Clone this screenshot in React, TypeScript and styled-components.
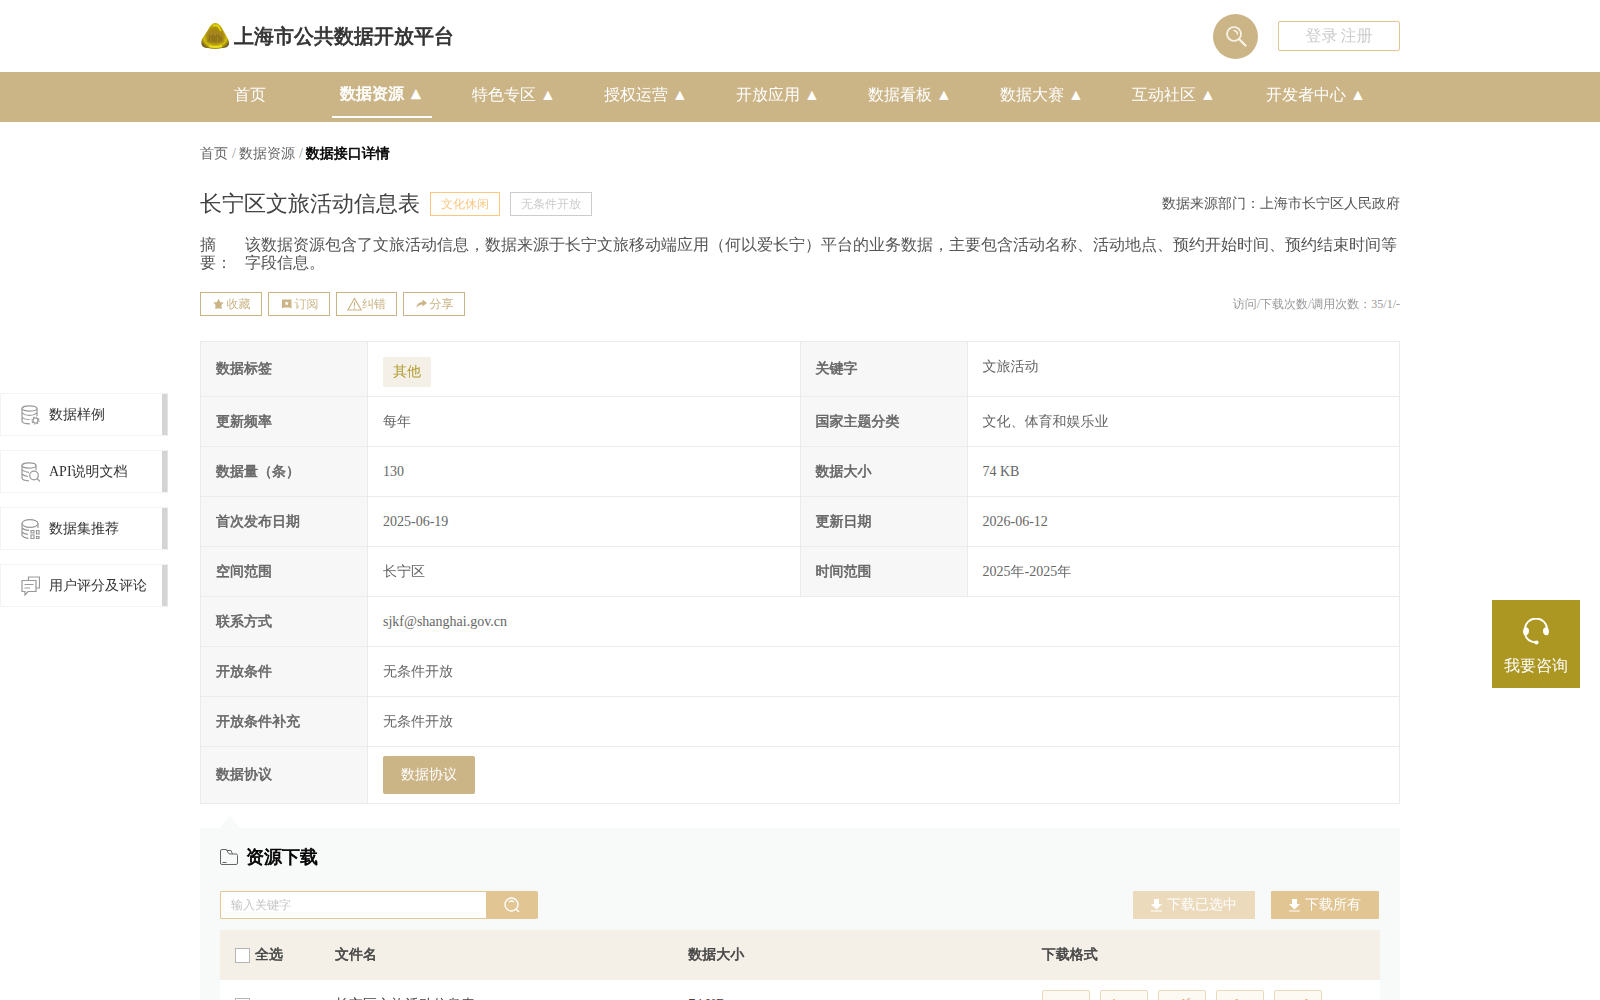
import React from 'react';
import styled, { createGlobalStyle, css } from 'styled-components';

const gold = '#cbb486';
const sand = '#e1c593';
const olive = '#ad9723';
const line = '#ebebeb';

// WenQuanYi Zen Hei has a single weight, so bold text is thickened with a stroke.
const heavy = css`
  font-weight: bold;
  -webkit-text-stroke: 0.04em currentColor;
`;

const GlobalStyle = createGlobalStyle`
  * { box-sizing: border-box; }
  body {
    margin: 0;
    background: #fff;
    color: #666;
    font: 14px/20px "Liberation Serif", "WenQuanYi Zen Hei", "Noto Sans CJK SC", serif;
  }
  button, input { font: inherit; margin: 0; }
  button { cursor: pointer; }
  a { color: inherit; text-decoration: none; }
  h1, h2, p, dl, dd, dt, ul, ol { margin: 0; padding: 0; font-weight: normal; }
  ul, ol { list-style: none; }
  svg { display: block; flex: none; }
`;

const Container = styled.div`
  width: 100%;
  max-width: 1200px;
  margin: 0 auto;
`;

const HeaderRow = styled(Container)`
  display: flex;
  align-items: center;
  height: 72px;
`;
const Brand = styled.a`
  display: flex;
  align-items: center;
  gap: 4px;
  margin-right: auto;
  padding-left: 1px;
  font-size: 20px;
  line-height: 26px;
  ${heavy}
  color: #333;
`;
const RoundButton = styled.button`
  display: grid;
  place-items: center;
  width: 45px;
  height: 45px;
  margin-right: 20px;
  padding: 0;
  border: 0;
  border-radius: 50%;
  background: ${gold};
  color: #fff;
`;
const Login = styled.div`
  display: flex;
  justify-content: center;
  align-items: center;
  gap: 3px;
  width: 122px;
  height: 30px;
  border: 1px solid ${sand};
  border-radius: 2px;
  font-size: 16px;
  color: #ccc;
`;

const NavBar = styled.nav`
  background: ${gold};
`;
const NavList = styled.ul`
  display: flex;
  gap: 32px;
  width: 100%;
  max-width: 1200px;
  height: 50px;
  margin: 0 auto;
`;
const NavLink = styled.a<{ $active?: boolean; $wide?: boolean }>`
  display: block;
  min-width: 100px;
  height: 46px;
  padding: 0 ${(p) => (p.$wide ? 10 : 8)}px;
  font-size: 16px;
  line-height: 46px;
  text-align: center;
  white-space: nowrap;
  color: #fff;
  ${(p) =>
    p.$active &&
    css`
      ${heavy}
      line-height: 44px;
      border-bottom: 2px solid #fff;
    `}
`;

const Crumbs = styled.ol`
  display: flex;
  gap: 4px;
  padding-top: 22px;
  li + li::before {
    content: '/';
    margin-right: 3px;
    color: #999;
  }
  strong { ${heavy} color: #000; }
`;
const TitleRow = styled.div`
  display: flex;
  align-items: center;
  gap: 10px;
  margin-top: 23px;
`;
const Title = styled.h1`
  font-size: 22px;
  line-height: 34px;
  color: #444;
`;
const Chip = styled.span<{ $muted?: boolean }>`
  height: 24px;
  padding: 0 10px;
  border: 1px solid ${(p) => (p.$muted ? '#ccc' : '#fbc780')};
  font-size: 12px;
  line-height: 22px;
  color: ${(p) => (p.$muted ? '#ccc' : '#fbc780')};
`;
const Source = styled.p`
  margin-left: auto;
  color: #555;
`;
const Summary = styled.dl`
  display: flex;
  gap: 10px;
  margin-top: 15px;
  font-size: 16px;
  line-height: 18px;
  color: #555;
  dt { flex: none; width: 35px; }
`;
const ActionRow = styled.div`
  display: flex;
  align-items: center;
  gap: 6px;
  margin-top: 20px;
`;
const ActionButton = styled.button<{ $tight?: boolean }>`
  display: flex;
  align-items: center;
  justify-content: center;
  gap: ${(p) => (p.$tight ? 0 : 3)}px;
  width: ${(p) => (p.$tight ? 61 : 62)}px;
  height: 24px;
  padding: 0;
  border: 1px solid ${gold};
  background: #fff;
  font-size: 12px;
  line-height: 22px;
  color: ${gold};
`;
const Visits = styled.p`
  margin-left: auto;
  font-size: 12px;
  color: #999;
`;

const InfoTable = styled.table`
  width: 100%;
  margin-top: 25px;
  border-collapse: collapse;
  table-layout: fixed;
  th, td {
    height: 50px;
    padding: 0 15px;
    border: 1px solid ${line};
    text-align: left;
  }
  th { ${heavy} background: #f7f7f7; }
`;
const LabelCol = styled.col`
  width: 167px;
`;
const Tag = styled.span`
  display: inline-block;
  margin-top: 6px;
  padding: 5px 10px;
  border-radius: 2px;
  background: #f4efe7;
  color: #b19c2b;
`;
const TagRow = styled.tr`
  th, td { height: 55px; }
  td:last-child { padding-bottom: 4px; }
`;
const ProtocolRow = styled.tr`
  th, td { height: 57px; }
`;
const ProtocolButton = styled.button`
  display: block;
  width: 92px;
  height: 38px;
  border: 0;
  border-radius: 2px;
  background: ${gold};
  color: #fff;
`;

const Panel = styled.section`
  position: relative;
  margin-top: 24px;
  padding: 18px 20px 40px;
  background: #f8faf9;
  &::before {
    content: '';
    position: absolute;
    left: 20px;
    top: -12px;
    border: 10px solid transparent;
    border-top: 0;
    border-bottom: 12px solid #f8faf9;
  }
`;
const PanelTitle = styled.h2`
  display: flex;
  align-items: center;
  gap: 8px;
  font-size: 18px;
  line-height: 22px;
  ${heavy}
  color: #000;
`;
const Toolbar = styled.div`
  display: flex;
  gap: 16px;
  margin: 23px 1px 11px 0;
`;
const SearchForm = styled.form`
  display: flex;
  width: 318px;
  margin-right: auto;
`;
const SearchInput = styled.input`
  flex: 1;
  min-width: 0;
  height: 28px;
  padding: 0 10px;
  border: 1px solid ${sand};
  border-right: 0;
  border-radius: 2px 0 0 2px;
  background: #fff;
  font-size: 12px;
  &::placeholder { color: #c4c4c4; }
`;
const SearchButton = styled.button`
  display: grid;
  place-items: center;
  width: 52px;
  height: 28px;
  padding: 0;
  border: 0;
  border-radius: 0 2px 2px 0;
  background: ${sand};
  color: #fff;
`;
const DownloadButton = styled.button`
  display: flex;
  align-items: center;
  gap: 4px;
  height: 28px;
  padding: 0 18px;
  border: 0;
  border-radius: 1px;
  background: ${sand};
  color: #fff;
  &:disabled { background: #ebdabb; }
`;
const FileTable = styled.table`
  width: 100%;
  border-collapse: collapse;
  table-layout: fixed;
  background: #fff;
  th, td {
    height: 50px;
    padding: 0 15px;
    text-align: left;
    color: #444;
  }
  th { ${heavy} background: #f4efe7; }
  th:first-child { width: 100px; padding-right: 0; }
`;
const CheckLabel = styled.label`
  display: flex;
  align-items: center;
  gap: 5px;
`;
const Check = styled.input`
  appearance: none;
  display: block;
  width: 15px;
  height: 15px;
  border: 1px solid #b5b5b5;
  background: #fff;
  &:checked { background: ${gold}; }
`;
const Formats = styled.div`
  display: flex;
  gap: 10px;
`;
const FormatButton = styled.button`
  width: 48px;
  height: 30px;
  padding: 0;
  border: 1px solid #eadabb;
  border-radius: 2px;
  background: #fdf9f3;
  color: #cba873;
`;

const SideNav = styled.nav`
  position: fixed;
  left: 0;
  top: 393px;
  display: flex;
  flex-direction: column;
  gap: 14px;
`;
const SideLink = styled.a`
  display: flex;
  align-items: center;
  gap: 9px;
  width: 168px;
  height: 43px;
  padding-left: 20px;
  border: 1px solid #f3f3f3;
  border-right-color: #e4e4e4;
  box-shadow: inset -5px 0 #d4d4d4;
  background: #fff;
  color: #333;
`;
const Consult = styled.button`
  position: fixed;
  right: 20px;
  top: 600px;
  display: flex;
  flex-direction: column;
  align-items: center;
  gap: 11px;
  width: 88px;
  height: 88px;
  padding: 18px 0 0;
  border: 0;
  background: ${olive};
  font-size: 16px;
  color: #fff;
`;

const Emblem = () => (
  <svg width="29" height="27" viewBox="0 0 29 27" aria-hidden="true">
    <defs>
      <radialGradient id="emblem" cx="50%" cy="48%" r="58%">
        <stop offset="0" stopColor="#a08212" />
        <stop offset="0.5" stopColor="#ab8d10" />
        <stop offset="0.75" stopColor="#d0bd08" />
        <stop offset="1" stopColor="#6f5a22" />
      </radialGradient>
    </defs>
    <path d="M14 0C18 0 20 3 22 7L27 16C30 23 26 25 21 25Q14 27 7 25C2 25 -1 22 1 16L7 7C9 3 11 0 14 0Z" fill="url(#emblem)" />
    <path d="M6 19Q6 8 14 7Q22 8 23 19Q14 22 6 19Z" fill="#a48520" opacity=".9" />
    <path d="M8 18 9 12M11 19V13Q12 11 13 13V19M15 19V13Q16 11 18 13V19M20 18V14" fill="none" stroke="#77600f" strokeWidth=".8" />
    <path d="M8 23Q14 25 21 23" fill="none" stroke="#e9df20" strokeWidth="2" />
    <path d="M12 3Q14 2 17 3L20 8" fill="none" stroke="#e3d709" strokeWidth="1.600" />
  </svg>
);
const Magnifier = () => (
  <svg width="22" height="22" viewBox="0 0 22 22" fill="none" stroke="#f8f4ea" strokeLinecap="round" aria-hidden="true">
    <circle cx="9" cy="9" r="7" strokeWidth="1.700" />
    <path d="M9 5.500a4 4 0 0 1 3.500 3.500" strokeWidth="1.500" />
    <path d="M14.500 14.500 20.500 20.500" strokeWidth="2.200" />
  </svg>
);
const SearchGlyph = () => (
  <svg width="16" height="16" viewBox="0 0 16 16" fill="none" stroke="currentColor" strokeWidth="1.400" aria-hidden="true">
    <circle cx="7.500" cy="7.500" r="6.500" />
    <path d="M5 5Q7.500 3 10 5M12 12l3 3" />
  </svg>
);
const Star = () => (
  <svg width="12" height="12" viewBox="0 0 12 12" fill="currentColor" aria-hidden="true">
    <path d="M6.500 .8 8.200 4.200 11.800 4.600 9.400 7 9.800 11 6.500 10.300 3.200 11 3.600 7 1.200 4.600 4.800 4.200Z" />
  </svg>
);
const Bookmark = () => (
  <svg width="12" height="12" viewBox="0 0 12 12" fill="currentColor" aria-hidden="true">
    <path fillRule="evenodd" d="M2 1.500h9.500v9L9.500 9.500H4L2 10.500ZM6.700 3.300 6 4.600 4.600 4.800 5.600 5.800 5.400 7.300 6.700 6.600 8 7.300 7.800 5.800 8.800 4.800 7.400 4.600Z" />
  </svg>
);
const Warning = () => (
  <svg width="15" height="14" viewBox="0 0 15 14" fill="none" stroke="currentColor" strokeWidth="1.200" aria-hidden="true">
    <path d="M7.500 1.500.8 13h13.400ZM7.500 5v4.500M7.500 10.500v1.500" />
  </svg>
);
const Share = () => (
  <svg width="12" height="12" viewBox="0 0 12 12" fill="currentColor" aria-hidden="true">
    <path d="M7.500 1.500 12 5 7.500 8.500V6.500Q3.500 6.500 1.500 10 1.500 4.500 7.500 3.700Z" />
  </svg>
);
const Folder = () => (
  <svg width="18" height="18" viewBox="0 0 18 18" fill="none" stroke="#666" aria-hidden="true">
    <path d="M.5 3Q.5 1.500 2 1.500H6.500L8 4.500Q8.500 6 10 6H16Q17.500 6 17.500 7.500V15Q17.500 16.500 16 16.500H2Q.5 16.500 .5 15ZM6.500 2.500H11L12.500 6M2.500 14.500H6.500" />
  </svg>
);
const Download = () => (
  <svg width="12" height="14" viewBox="0 0 12 14" fill="currentColor" aria-hidden="true">
    <path d="M3 1h5v5H11L5.500 11.500 0 6h3ZM0 12.500h11v1H0Z" />
  </svg>
);
const Headset = () => (
  <svg width="26" height="27" viewBox="0 0 26 27" aria-hidden="true">
    <path d="M2 11a11 10.500 0 0 1 22 0M2 16q1.500 7.500 11 8.500" fill="none" stroke="#fff" strokeWidth="1.800" />
    <path d="M1 10Q6 8 6 13T1 17Q-1 13.500 1 10ZM25 10Q20 8 20 13T25 17Q27 13.500 25 10Z" fill="#fff" />
    <circle cx="13.500" cy="24.500" r="2.100" fill="#fff" />
  </svg>
);

type SideKind = 'sample' | 'api' | 'set' | 'chat';
const sidePaths: Record<SideKind, React.ReactNode> = {
  sample: (
    <>
      <ellipse cx="8.500" cy="3.500" rx="7.500" ry="2.700" />
      <path d="M1 3.500V16Q1 18.800 9 18.800M16 3.500V11M1 7.500Q3 10.300 8.500 10.300T16 7.500M1 12Q3 14.500 8.500 14.600" />
      <circle cx="14.500" cy="15.500" r="2.500" />
      <circle cx="14.500" cy="15.500" r="3.500" strokeDasharray="1.400 1.350" />
    </>
  ),
  api: (
    <>
      <ellipse cx="8" cy="3.500" rx="7" ry="2.700" />
      <path d="M1 3.500V16Q1 18.500 8 18.800M15 3.500V8M1 7.500Q3 10 8 10.300M1 12Q3 14.200 7 14.500" />
      <circle cx="13" cy="13.500" r="4.300" />
      <path d="m16 16.500 3 3" />
    </>
  ),
  set: (
    <>
      <ellipse cx="9" cy="4.500" rx="8" ry="3.800" />
      <path d="M1 4.500V16Q2 19 7.500 19.300M17 4.500V9M1 9Q3 11 8 11.300M1 13Q3 15 7 15.300M10 11.500h3v2.500h-3ZM15.500 11.500h2.500v3.500h-2.500ZM10 16h3v3.500h-3ZM15.500 17.500h2.500v2h-2.500Z" />
    </>
  ),
  chat: (
    <path d="M7.500 4.500V1H18.500V12H15.500M1 4.500H15V15.500H7L4 19V15.500H1ZM3.500 8.500H12.500M3.500 12H9" />
  ),
};
const SideIcon = ({ kind }: { kind: SideKind }) => (
  <svg width="19" height="20" viewBox="0 0 19 20" fill="none" stroke="#999" strokeWidth="1.200" aria-hidden="true">
    {sidePaths[kind]}
  </svg>
);

const menu = ['首页', '数据资源', '特色专区', '授权运营', '开放应用', '数据看板', '数据大赛', '互动社区', '开发者中心'];
const pairs = [
  ['更新频率', '每年', '国家主题分类', '文化、体育和娱乐业'],
  ['数据量（条）', '130', '数据大小', '74 KB'],
  ['首次发布日期', '2025-06-19', '更新日期', '2026-06-12'],
  ['空间范围', '长宁区', '时间范围', '2025年-2025年'],
];
const singles = [
  ['联系方式', 'sjkf@shanghai.gov.cn'],
  ['开放条件', '无条件开放'],
  ['开放条件补充', '无条件开放'],
];
const side: [SideKind, string][] = [
  ['sample', '数据样例'],
  ['api', 'API说明文档'],
  ['set', '数据集推荐'],
  ['chat', '用户评分及评论'],
];

export default function App() {
  return (
    <>
      <GlobalStyle />
      <header>
        <HeaderRow>
          <Brand href="#"><Emblem />上海市公共数据开放平台</Brand>
          <RoundButton aria-label="搜索"><Magnifier /></RoundButton>
          <Login><a href="#">登录</a><a href="#">注册</a></Login>
        </HeaderRow>
        <NavBar>
          <NavList>
            {menu.map((name, i) => (
              <li key={name}>
                <NavLink href="#" $active={i === 1} $wide={name.length > 4}>{i ? `${name} ▲` : name}</NavLink>
              </li>
            ))}
          </NavList>
        </NavBar>
      </header>
      <Container as="main">
        <Crumbs>
          <li><a href="#">首页</a></li>
          <li><a href="#">数据资源</a></li>
          <li><strong>数据接口详情</strong></li>
        </Crumbs>
        <TitleRow>
          <Title>长宁区文旅活动信息表</Title>
          <Chip>文化休闲</Chip>
          <Chip $muted>无条件开放</Chip>
          <Source>数据来源部门：上海市长宁区人民政府</Source>
        </TitleRow>
        <Summary>
          <dt>摘 要：</dt>
          <dd>该数据资源包含了文旅活动信息，数据来源于长宁文旅移动端应用（何以爱长宁）平台的业务数据，主要包含活动名称、活动地点、预约开始时间、预约结束时间等字段信息。</dd>
        </Summary>
        <ActionRow>
          <ActionButton><Star />收藏</ActionButton>
          <ActionButton><Bookmark />订阅</ActionButton>
          <ActionButton $tight><Warning />纠错</ActionButton>
          <ActionButton><Share />分享</ActionButton>
          <Visits>访问/下载次数/调用次数：35/1/-</Visits>
        </ActionRow>
        <InfoTable>
          <colgroup>
            <LabelCol /><col /><LabelCol /><col />
          </colgroup>
          <tbody>
            <TagRow>
              <th scope="row">数据标签</th><td><Tag>其他</Tag></td>
              <th scope="row">关键字</th><td>文旅活动</td>
            </TagRow>
            {pairs.map(([a, b, c, d]) => (
              <tr key={a}><th scope="row">{a}</th><td>{b}</td><th scope="row">{c}</th><td>{d}</td></tr>
            ))}
            {singles.map(([a, b]) => (
              <tr key={a}><th scope="row">{a}</th><td colSpan={3}>{b}</td></tr>
            ))}
            <ProtocolRow>
              <th scope="row">数据协议</th>
              <td colSpan={3}><ProtocolButton>数据协议</ProtocolButton></td>
            </ProtocolRow>
          </tbody>
        </InfoTable>
        <Panel>
          <PanelTitle><Folder />资源下载</PanelTitle>
          <Toolbar>
            <SearchForm onSubmit={(e) => e.preventDefault()}>
              <SearchInput type="text" aria-label="关键字" placeholder="输入关键字" />
              <SearchButton aria-label="搜索"><SearchGlyph /></SearchButton>
            </SearchForm>
            <DownloadButton disabled><Download />下载已选中</DownloadButton>
            <DownloadButton><Download />下载所有</DownloadButton>
          </Toolbar>
          <FileTable>
            <thead>
              <tr>
                <th scope="col"><CheckLabel><Check type="checkbox" />全选</CheckLabel></th>
                <th scope="col">文件名</th>
                <th scope="col">数据大小</th>
                <th scope="col">下载格式</th>
              </tr>
            </thead>
            <tbody>
              <tr>
                <td><Check type="checkbox" aria-label="长宁区文旅活动信息表" /></td>
                <td>长宁区文旅活动信息表</td>
                <td>74 KB</td>
                <td>
                  <Formats>
                    {['csv', 'json', 'rdf', 'xlsx', 'xml'].map((f) => <FormatButton key={f}>{f}</FormatButton>)}
                  </Formats>
                </td>
              </tr>
            </tbody>
          </FileTable>
        </Panel>
      </Container>
      <SideNav>
        {side.map(([kind, name]) => (
          <SideLink href="#" key={kind}><SideIcon kind={kind} />{name}</SideLink>
        ))}
      </SideNav>
      <Consult><Headset />我要咨询</Consult>
    </>
  );
}
